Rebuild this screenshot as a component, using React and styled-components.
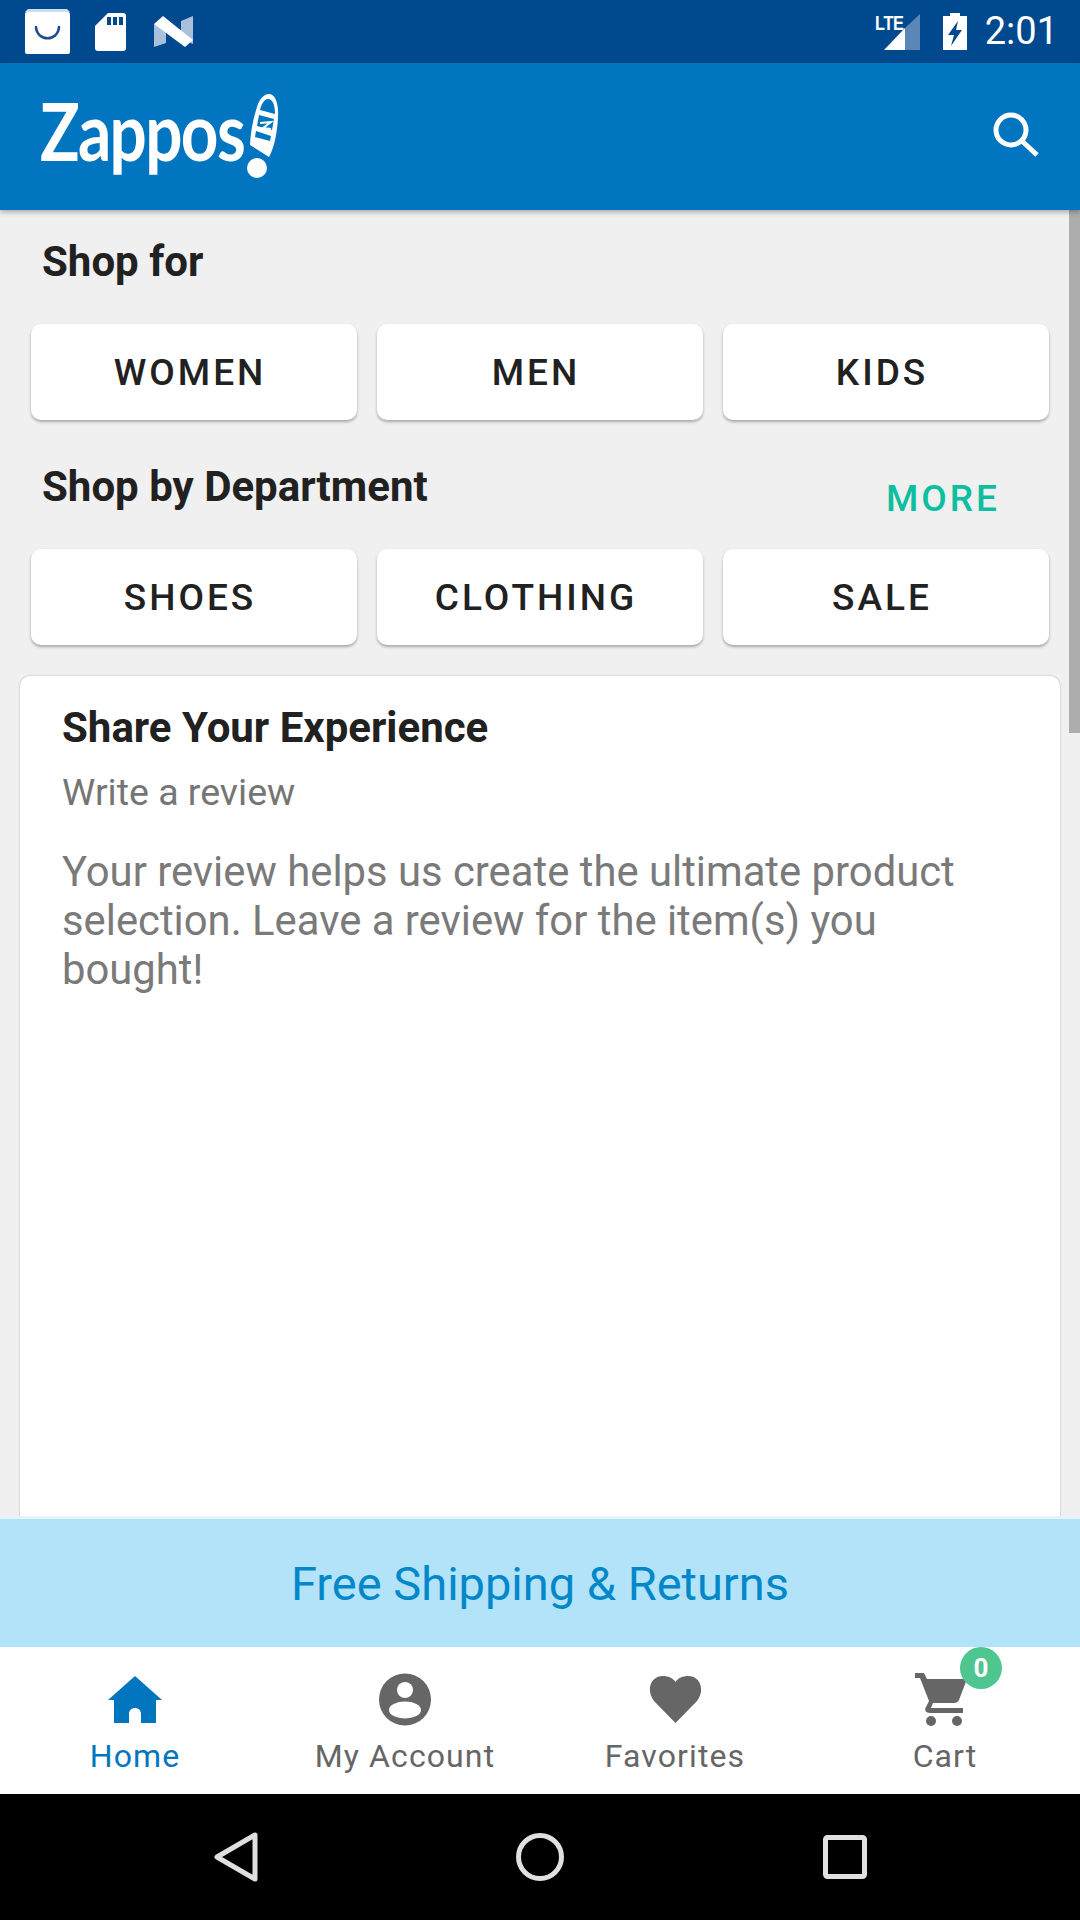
import styled, { createGlobalStyle } from "styled-components";

const GlobalStyle = createGlobalStyle`
  html, body {
    margin: 0;
    padding: 0;
    background: #000;
  }
  * {
    box-sizing: border-box;
  }
`;

const shopFor = ["WOMEN", "MEN", "KIDS"];
const departments = ["SHOES", "CLOTHING", "SALE"];

function BagIcon() {
  return (
    <svg width="45" height="45" viewBox="0 0 45 45">
      <path d="M3 0h39l3 3H0z" fill="#c9dcf0" />
      <rect y="3" width="45" height="42" rx="2" fill="#fff" />
      <path d="M11 18c1 15 22 15 23 0" fill="none" stroke="#1d4f86" strokeWidth="2.6" strokeLinecap="round" />
    </svg>
  );
}

function SdIcon() {
  return (
    <svg width="34" height="38" viewBox="0 0 34 38">
      <path d="M13 0h15a3 3 0 0 1 3 3v32a3 3 0 0 1-3 3H3a3 3 0 0 1-3-3V13z" fill="#fff" />
      <path d="M12 4h4v8h-4zM18 4h4v8h-4zM24 4h4v8h-4z" fill="#00498e" />
    </svg>
  );
}

function NIcon() {
  return (
    <svg width="39" height="32" viewBox="0 0 39 32">
      <path d="M0 8l12 3v16L0 31zM27 5l12-5v28l-12-5z" fill="#a9c0dd" />
      <path d="M0 8l9-8 30 24-8 7z" fill="#fff" />
    </svg>
  );
}

function SignalIcon() {
  return (
    <svg width="36" height="36" viewBox="0 0 36 36">
      <path d="M36 0v36H21V14z" fill="#5a87b8" />
      <path d="M21 14v22H0z" fill="#fff" />
    </svg>
  );
}

function BatteryIcon() {
  return (
    <svg width="24" height="37" viewBox="0 0 24 37">
      <path d="M7 0h10v3h7v34H0V3h7z" fill="#fff" />
      <path d="M15 8L5 22h6l-3 11 11-16h-6z" fill="#00498e" />
    </svg>
  );
}

function SearchIcon() {
  return (
    <svg width="46" height="46" viewBox="0 0 46 46">
      <circle cx="18" cy="18" r="15" fill="none" stroke="#fff" strokeWidth="5" />
      <path d="M29 29l15 14" fill="none" stroke="#fff" strokeWidth="5" />
    </svg>
  );
}

function ShoeMark() {
  return (
    <svg width="40" height="90" viewBox="0 0 40 90">
      <path d="M23 4c7-1 11 9 10 24-1 16-4 30-9 39L5 55C6 40 8 30 12 17c2-7 6-12 11-13z" fill="#fff" />
      <path d="M23 9c5 0 7 7 7 15l-15-4c1-5 4-11 8-11z" fill="#0175bf" />
      <path d="M14 25l15 4-2 11-15-4zM11 41l15 5-1 5-15-4z" fill="#0175bf" />
      <path d="M15 33l11-1-8 6 8 1" fill="none" stroke="#fff" strokeWidth="2" />
      <circle cx="12" cy="78" r="10" fill="#fff" />
    </svg>
  );
}

function HomeIcon() {
  return (
    <svg width="54" height="47" viewBox="0 0 54 47">
      <path fillRule="evenodd" d="M27 0l27 24h-5l-1 0v23H33V38c0-8-12-8-12 0v9H6V24H0z" fill="#0175bd" />
    </svg>
  );
}

function AccountIcon() {
  return (
    <svg width="52" height="53" viewBox="0 0 52 53">
      <circle cx="26" cy="26.5" r="26" fill="#666" />
      <circle cx="26" cy="17" r="8" fill="#fff" />
      <ellipse cx="26" cy="37" rx="16" ry="8.5" fill="#fff" />
    </svg>
  );
}

function HeartIcon() {
  return (
    <svg width="53" height="47" viewBox="0 0 53 47">
      <path d="M26.5 47L5 25C-3 15 1 0 14 0c5 0 10 2 12.500 6C29 2 34 0 39 0c13 0 17 15 9 25z" fill="#666" />
    </svg>
  );
}

function CartIcon() {
  return (
    <svg width="52" height="53" viewBox="0 0 52 53">
      <path d="M0 0h9l3 6h40l-8 21c-1 2-3 3-5 3H18l-2 5h32v5H15c-4 0-6-3-4-6l3-6L5 5H0z" fill="#666" />
      <circle cx="16" cy="48" r="5" fill="#666" />
      <circle cx="42" cy="48" r="5" fill="#666" />
    </svg>
  );
}

function BackKey() {
  return (
    <svg width="48" height="50" viewBox="0 0 48 50">
      <path d="M6 25L44 3v44z" fill="none" stroke="#e0e0e0" strokeWidth="5" strokeLinejoin="round" />
    </svg>
  );
}

function HomeKey() {
  return (
    <svg width="48" height="48" viewBox="0 0 48 48">
      <circle cx="24" cy="24" r="21.500" fill="none" stroke="#e0e0e0" strokeWidth="5" />
    </svg>
  );
}

function RecentKey() {
  return (
    <svg width="48" height="48" viewBox="0 0 48 48">
      <rect x="4.500" y="4.500" width="39" height="39" rx="2" fill="none" stroke="#e0e0e0" strokeWidth="5" />
    </svg>
  );
}

export default function App() {
  return (
    <Screen>
      <GlobalStyle />
      <StatusBar>
        <StatusLeft>
          <BagIcon />
          <SdIcon />
          <NIcon />
        </StatusLeft>
        <StatusRight>
          <Network>
            <LteLabel>LTE</LteLabel>
            <SignalIcon />
          </Network>
          <BatteryIcon />
          <Clock>2:01</Clock>
        </StatusRight>
      </StatusBar>

      <Header>
        <Logo>
          <LogoText>Zappos</LogoText>
          <ShoeMark />
        </Logo>
        <SearchIcon />
      </Header>

      <Content>
        <ScrollThumb />
        <SectionRow>
          <SectionTitle>Shop for</SectionTitle>
        </SectionRow>
        <ButtonRow>
          {shopFor.map((label) => (
            <ShopButton key={label}>{label}</ShopButton>
          ))}
        </ButtonRow>
        <SectionRow $tall>
          <SectionTitle>Shop by Department</SectionTitle>
          <MoreLink>MORE</MoreLink>
        </SectionRow>
        <ButtonRow>
          {departments.map((label) => (
            <ShopButton key={label}>{label}</ShopButton>
          ))}
        </ButtonRow>
        <ReviewCard>
          <CardTitle>Share Your Experience</CardTitle>
          <CardSubtitle>Write a review</CardSubtitle>
          <CardBody>
            Your review helps us create the ultimate product selection. Leave a
            review for the item(s) you bought!
          </CardBody>
        </ReviewCard>
      </Content>

      <Banner>Free Shipping &amp; Returns</Banner>

      <BottomNav>
        <NavItem $active>
          <NavIcon>
            <HomeIcon />
          </NavIcon>
          Home
        </NavItem>
        <NavItem>
          <NavIcon>
            <AccountIcon />
          </NavIcon>
          My Account
        </NavItem>
        <NavItem>
          <NavIcon>
            <HeartIcon />
          </NavIcon>
          Favorites
        </NavItem>
        <NavItem>
          <NavIcon $offset>
            <CartIcon />
            <Badge>0</Badge>
          </NavIcon>
          Cart
        </NavItem>
      </BottomNav>

      <SoftKeys>
        <BackKey />
        <HomeKey />
        <RecentKey />
      </SoftKeys>
    </Screen>
  );
}

const Screen = styled.div`
  display: flex;
  flex-direction: column;
  width: 1080px;
  height: 1920px;
  overflow: hidden;
  background: #f0f0f0;
  font-family: Roboto, "Liberation Sans", sans-serif;
`;

const StatusBar = styled.div`
  display: flex;
  align-items: center;
  justify-content: space-between;
  flex: 0 0 63px;
  padding: 0 22px 0 25px;
  background: #00498e;
`;

const StatusLeft = styled.div`
  display: flex;
  align-items: center;
  gap: 25px;
`;

const StatusRight = styled.div`
  display: flex;
  align-items: center;
  gap: 23px;
`;

const Network = styled.div`
  position: relative;
  display: flex;
  padding-left: 9px;
`;

const LteLabel = styled.span`
  position: absolute;
  top: -3px;
  left: 0;
  color: #fff;
  font-family: "Liberation Sans", sans-serif;
  font-size: 21px;
  font-weight: 700;
  letter-spacing: -0.5px;
  transform: scaleX(0.78);
  transform-origin: left;
`;

const Clock = styled.span`
  margin-left: -5px;
  color: #fff;
  font-size: 38px;
  line-height: 63px;
`;

const Header = styled.header`
  position: relative;
  z-index: 2;
  display: flex;
  align-items: flex-start;
  justify-content: space-between;
  flex: 0 0 147px;
  padding: 22px 41px 0 40px;
  background: #0175bf;
  box-shadow: 0 2px 5px rgba(0, 0, 0, 0.3);

  > svg {
    margin-top: 27px;
  }
`;

const Logo = styled.div`
  display: flex;
  align-items: flex-start;
  margin-top: 5px;
`;

const LogoText = styled.span`
  width: 205px;
  color: #fff;
  font-family: Lato, sans-serif;
  font-size: 80px;
  font-weight: 700;
  line-height: 80px;
  letter-spacing: -2px;
  transform: scaleX(0.82);
  transform-origin: left;
`;

const Content = styled.main`
  position: relative;
  flex: 1;
  min-height: 0;
  overflow: hidden;
`;

const ScrollThumb = styled.div`
  position: absolute;
  top: 0;
  right: 0;
  width: 11px;
  height: 523px;
  background: #adadad;
`;

const SectionRow = styled.div`
  display: flex;
  justify-content: space-between;
  height: ${(props) => (props.$tall ? "129px" : "114px")};
  padding: ${(props) => (props.$tall ? "43px 80px 0 42px" : "28px 42px 0")};
`;

const SectionTitle = styled.h2`
  margin: 0;
  color: #212121;
  font-size: 42px;
  font-weight: 700;
  line-height: 48px;
`;

const MoreLink = styled.span`
  margin-top: 12px;
  color: #0dbf9f;
  font-size: 37px;
  font-weight: 500;
  line-height: 48px;
  letter-spacing: 3px;
`;

const ButtonRow = styled.div`
  display: flex;
  gap: 20px;
  padding: 0 31px;
`;

const ShopButton = styled.button`
  flex: 0 0 326px;
  height: 96px;
  padding: 0 8px 0 0;
  border: 0;
  border-radius: 10px;
  background: #fff;
  box-shadow: 0 2px 3px rgba(0, 0, 0, 0.3);
  color: #212121;
  font-family: inherit;
  font-size: 37px;
  font-weight: 500;
  letter-spacing: 3px;
`;

const ReviewCard = styled.section`
  height: 860px;
  margin: 31px 20px 0;
  padding: 28px 42px;
  border-radius: 10px;
  background: #fff;
  box-shadow: 0 0 2px rgba(0, 0, 0, 0.3);
`;

const CardTitle = styled.h3`
  margin: 0;
  color: #212121;
  font-size: 42px;
  font-weight: 700;
  line-height: 48px;
`;

const CardSubtitle = styled.p`
  margin: 16px 0 0;
  color: #757575;
  font-size: 37.5px;
  line-height: 48px;
`;

const CardBody = styled.p`
  margin: 31px 0 0;
  color: #7a7a7a;
  font-size: 41.8px;
  line-height: 49px;
`;

const Banner = styled.div`
  position: relative;
  display: flex;
  align-items: center;
  justify-content: center;
  flex: 0 0 128px;
  background: #b3e3f9;
  box-shadow: 0 -3px 0 #e6f4fa;
  color: #0288c8;
  font-size: 47px;
`;

const BottomNav = styled.nav`
  display: grid;
  grid-template-columns: repeat(4, 270px);
  flex: 0 0 147px;
  background: #fff;
`;

const NavItem = styled.div`
  display: flex;
  flex-direction: column;
  align-items: center;
  padding-top: 26px;
  color: ${(props) => (props.$active ? "#0175bd" : "#666")};
  font-size: 32px;
  line-height: 38px;
  letter-spacing: 1.1px;
`;

const NavIcon = styled.div`
  position: relative;
  display: flex;
  align-items: center;
  justify-content: center;
  height: 53px;
  margin-bottom: 11px;
  padding-right: ${(props) => (props.$offset ? "8px" : "0")};
`;

const Badge = styled.span`
  position: absolute;
  top: -26px;
  left: 45px;
  width: 42px;
  height: 42px;
  border-radius: 50%;
  background: #4fc58f;
  color: #fff;
  font-size: 26px;
  font-weight: 700;
  line-height: 42px;
  letter-spacing: 0;
  text-align: center;
`;

const SoftKeys = styled.div`
  display: flex;
  align-items: center;
  justify-content: center;
  gap: 257px;
  flex: 0 0 126px;
  background: #000;
`;
